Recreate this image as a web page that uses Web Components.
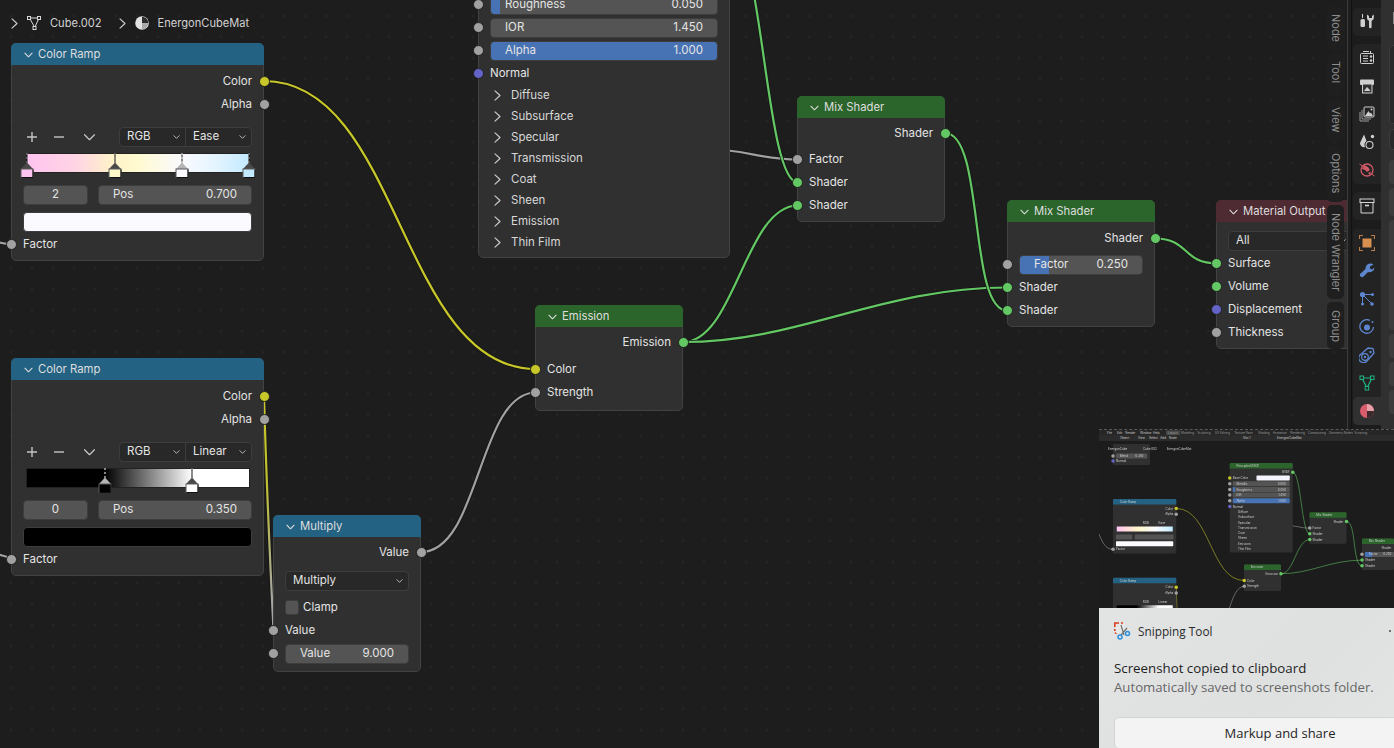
<!DOCTYPE html>
<html>
<head>
<meta charset="utf-8">
<title>Shader editor</title>
<style>
  html, body { margin: 0; height: 100%; background: #1d1d1d; overflow: hidden; }
</style>
</head>
<body>
<blender-app>
  <node-canvas slot="canvas">
    <node-wires></node-wires>

    <bl-node x="11" y="43" w="253" kind="blue" label="Color Ramp">
      <bl-row side="out" sock="yellow" label="Color" style="margin-top:1px"></bl-row>
      <bl-row side="out" sock="gray" label="Alpha"></bl-row>
      <color-ramp interp="Ease" index="2" pos="0.700" swatch="#fafaff" active="2"
        gradient="#ffc4f0 0%, #ffd4e4 22%, #fff3c8 39%, #fffad0 50%, #fafaff 70%, #e4f4ff 85%, #c2eaff 100%"
        stops="0:#ffc4f0,39.7:#fff8c9,70:#fafaff,100:#c2eaff"></color-ramp>
      <bl-row side="in" sock="gray" label="Factor"></bl-row>
    </bl-node>

    <bl-node x="11" y="358" w="253" kind="blue" label="Color Ramp">
      <bl-row side="out" sock="yellow" label="Color" style="margin-top:1px"></bl-row>
      <bl-row side="out" sock="gray" label="Alpha"></bl-row>
      <color-ramp interp="Linear" index="0" pos="0.350" swatch="#000000" active="0"
        gradient="#000 0%, #000 35%, #fff 74.5%, #fff 100%"
        stops="35:#000000,74.5:#ffffff"></color-ramp>
      <bl-row side="in" sock="gray" label="Factor"></bl-row>
    </bl-node>

    <bl-node x="273" y="515" w="148" kind="blue" label="Multiply">
      <bl-row side="out" sock="gray" label="Value"></bl-row>
      <bl-row style="margin-top:5px"><bl-select label="Multiply"></bl-select></bl-row>
      <bl-row style="margin-top:4px"><bl-check label="Clamp"></bl-check></bl-row>
      <bl-row side="in" sock="gray" label="Value"></bl-row>
      <bl-row side="in" sock="gray" style="margin-bottom:2px"><bl-field label="Value" value="9.000"></bl-field></bl-row>
    </bl-node>

    <bl-node x="478" y="-8" w="252">
      <bl-row side="in" sock="gray"><bl-field label="Roughness" value="0.050" fill="4"></bl-field></bl-row>
      <bl-row side="in" sock="gray"><bl-field label="IOR" value="1.450"></bl-field></bl-row>
      <bl-row side="in" sock="gray"><bl-field label="Alpha" value="1.000" fill="100"></bl-field></bl-row>
      <bl-row side="in" sock="purple" label="Normal"></bl-row>
      <bl-panel label="Diffuse"></bl-panel>
      <bl-panel label="Subsurface"></bl-panel>
      <bl-panel label="Specular"></bl-panel>
      <bl-panel label="Transmission"></bl-panel>
      <bl-panel label="Coat"></bl-panel>
      <bl-panel label="Sheen"></bl-panel>
      <bl-panel label="Emission"></bl-panel>
      <bl-panel label="Thin Film"></bl-panel>
    </bl-node>

    <bl-node x="535" y="305" w="148" kind="green" label="Emission">
      <bl-row side="out" sock="green" label="Emission"></bl-row>
      <bl-row side="in" sock="yellow" label="Color" style="margin-top:4px"></bl-row>
      <bl-row side="in" sock="gray" label="Strength" style="margin-bottom:2px"></bl-row>
    </bl-node>

    <bl-node x="797" y="96" w="148" kind="green" label="Mix Shader">
      <bl-row side="out" sock="green" label="Shader"></bl-row>
      <bl-row side="in" sock="gray" label="Factor" style="margin-top:3px"></bl-row>
      <bl-row side="in" sock="green" label="Shader"></bl-row>
      <bl-row side="in" sock="green" label="Shader"></bl-row>
    </bl-node>

    <bl-node x="1007" y="200" w="148" kind="green" label="Mix Shader">
      <bl-row side="out" sock="green" label="Shader" style="margin-top:1px"></bl-row>
      <bl-row side="in" sock="gray" style="margin-top:3px"><bl-field label="Factor" value="0.250" fill="23.5"></bl-field></bl-row>
      <bl-row side="in" sock="green" label="Shader"></bl-row>
      <bl-row side="in" sock="green" label="Shader"></bl-row>
    </bl-node>

    <bl-node x="1216" y="200" w="148" kind="red" label="Material Output">
      <bl-row style="margin-top:3px"><bl-select label="All"></bl-select></bl-row>
      <bl-row side="in" sock="green" label="Surface"></bl-row>
      <bl-row side="in" sock="green" label="Volume"></bl-row>
      <bl-row side="in" sock="purple" label="Displacement"></bl-row>
      <bl-row side="in" sock="gray" label="Thickness"></bl-row>
    </bl-node>

    <node-breadcrumb></node-breadcrumb>
    <side-tabs></side-tabs>
  </node-canvas>
  <prop-strip slot="strip"></prop-strip>
  <snip-toast slot="toast"></snip-toast>
</blender-app>

<script>
const FONT = 'Inter, "Liberation Sans", sans-serif';

const SOCKETS = { yellow: '#c7c729', gray: '#a1a1a1', green: '#63c763', purple: '#6363c7' };
const HEADERS = { blue: '#246283', green: '#2b652b', red: '#4e2a32' };

// shared between the real graph and the thumbnail in the toast
const WIRES = [
  ['M-60 150 C-30 220 -20 244 11 244', '#a1a1a1'],
  ['M-10 552 L11 558', '#a1a1a1'],
  ['M264 81 C400 81 400 369 536 369', '#c7c729'],
  ['M264 396 C266 470 270 560 273.5 630', 'url(#fade)'],
  ['M421 552 C480 552 478 392.5 536 392.5', '#a1a1a1'],
  ['M700 148 C750 150 760 159.5 798 159.5', '#a1a1a1'],
  ['M730 -64 C763 -64 765 182.5 798 182.5', '#63c763'],
  ['M683 342 C735 342 745 205.5 798 205.5', '#63c763'],
  ['M683 342 C800 342 880 287.5 1007 287.5', '#63c763'],
  ['M945 133 C985 133 968 310.5 1007 310.5', '#63c763'],
  ['M1155 238.5 C1190 238.5 1182 263.5 1217 263.5', '#63c763']
];
const WIRE_DEFS = `<defs><linearGradient id="fade" gradientUnits="userSpaceOnUse" x1="0" y1="396" x2="0" y2="630">
  <stop offset="0" stop-color="#c7c729"/><stop offset=".35" stop-color="#c0c030"/><stop offset=".85" stop-color="#a8a8a0"/><stop offset="1" stop-color="#a1a1a1"/>
</linearGradient></defs>`;

const CHEVRON_DOWN = (w, h, c = '#dcdcdc') => `<svg width="${w}" height="${h}" viewBox="0 0 10 6" fill="none" stroke="${c}" stroke-width="1.2" stroke-linecap="round" stroke-linejoin="round"><path d="M1 1 L5 5 L9 1"/></svg>`;
const CHEVRON_RIGHT = `<svg width="7" height="11" viewBox="0 0 7 11" fill="none" stroke="#cfcfcf" stroke-width="1.1" stroke-linecap="round" stroke-linejoin="round"><path d="M1 .8 L6 5.5 L1 10.2"/></svg>`;

class BlenderApp extends HTMLElement {
  constructor() {
    super();
    this.attachShadow({ mode: 'open' });
    this.shadowRoot.innerHTML = `
      <style>
        :host { display: flex; width: 1394px; height: 748px; position: relative; overflow: hidden; font-family: ${FONT}; }
        .toast { position: absolute; left: 1099px; top: 429px; right: 0; bottom: 0; }
      </style>
      <slot name="canvas"></slot>
      <slot name="strip"></slot>
      <div class="toast"><slot name="toast"></slot></div>`;
  }
}

class NodeCanvas extends HTMLElement {
  constructor() {
    super();
    this.attachShadow({ mode: 'open' });
    this.shadowRoot.innerHTML = `
      <style>
        :host {
          display: block; position: relative; flex: none; width: 1347px; height: 748px; overflow: hidden;
          background-color: #1d1d1d;
          background-image: radial-gradient(circle, #2c2c2c 0, #2c2c2c .8px, transparent 1.2px);
          background-size: 21px 21px;
          background-position: .5px 5.5px;
        }
      </style>
      <slot></slot>`;
  }
}

class NodeWires extends HTMLElement {
  constructor() {
    super();
    this.attachShadow({ mode: 'open' });
    const paths = WIRES.map(([d, c]) =>
      `<path d="${d}" stroke="#141414" stroke-width="3.6" fill="none"/><path d="${d}" stroke="${c}" stroke-width="2.2" fill="none"/>`).join('');
    this.shadowRoot.innerHTML = `
      <style>:host { position: absolute; left: 0; top: 0; } svg { display: block; overflow: visible; }</style>
      <svg width="1347" height="748">${WIRE_DEFS}${paths}</svg>`;
  }
}

class BlNode extends HTMLElement {
  connectedCallback() {
    if (this.shadowRoot) return;
    this.attachShadow({ mode: 'open' });
    const kind = this.getAttribute('kind');
    const label = this.getAttribute('label');
    this.style.left = this.getAttribute('x') + 'px';
    this.style.top = this.getAttribute('y') + 'px';
    this.style.width = this.getAttribute('w') + 'px';
    this.shadowRoot.innerHTML = `
      <style>
        :host {
          display: block; position: absolute; box-sizing: border-box;
          background: #303030; border: 1px solid #424242; border-radius: 5px;
          color: #e4e4e4; font-size: 11.5px; line-height: 1;
        }
        .head {
          display: flex; align-items: center; gap: 5px; height: 21px; padding-left: 12px; margin: -1px -1px 0;
          border: 1px solid transparent; border-bottom: 0; border-radius: 5px 5px 0 0;
          background: ${HEADERS[kind] || 'none'}; color: #dedede; font-size: 11.3px;
        }
        .body { padding: ${kind ? 4 : 0}px 0 4px; }
      </style>
      ${kind ? `<div class="head">${CHEVRON_DOWN(9, 6)}<span>${label}</span></div>` : ''}
      <div class="body"><slot></slot></div>`;
  }
}

class BlRow extends HTMLElement {
  connectedCallback() {
    if (this.shadowRoot) return;
    this.attachShadow({ mode: 'open' });
    const side = this.getAttribute('side');
    const sock = this.getAttribute('sock');
    const label = this.getAttribute('label');
    this.shadowRoot.innerHTML = `
      <style>
        :host {
          display: flex; align-items: center; position: relative; box-sizing: border-box; height: 23px; padding: 0 11px;
          justify-content: ${side === 'out' && label ? 'flex-end' : 'flex-start'};
        }
        .dot {
          position: absolute; top: 50%; width: 9px; height: 9px; margin-top: -5.5px; border-radius: 50%;
          border: 1px solid #202020; background: ${SOCKETS[sock] || 'none'};
          ${side === 'out' ? 'right: -6.5px;' : 'left: -6.5px;'}
        }
      </style>
      ${sock ? '<span class="dot"></span>' : ''}
      ${label ? `<span>${label}</span>` : '<slot></slot>'}`;
  }
}

class BlPanel extends HTMLElement {
  connectedCallback() {
    if (this.shadowRoot) return;
    this.attachShadow({ mode: 'open' });
    this.shadowRoot.innerHTML = `
      <style>
        :host { display: flex; align-items: center; gap: 10px; height: 21px; padding-left: 15px; color: #d8d8d8; }
        svg { display: block; }
      </style>
      ${CHEVRON_RIGHT}<span>${this.getAttribute('label')}</span>`;
  }
}

class BlField extends HTMLElement {
  connectedCallback() {
    if (this.shadowRoot) return;
    this.attachShadow({ mode: 'open' });
    const fill = this.getAttribute('fill');
    const label = this.getAttribute('label');
    const value = this.getAttribute('value');
    const bg = fill ? `linear-gradient(90deg, #4772b3 ${fill}%, #545454 ${fill}%)` : '#545454';
    this.shadowRoot.innerHTML = `
      <style>
        :host {
          display: flex; flex: 1; align-items: center; justify-content: ${label ? 'space-between' : 'center'};
          box-sizing: border-box; height: 20px; padding: 0 14px; border: 1px solid #3d3d3d; border-radius: 4px;
          background: ${bg}; color: #e4e4e4; font-size: 11.5px;
        }
      </style>
      ${label ? `<span>${label}</span>` : ''}<span>${value}</span>`;
  }
}

class BlSelect extends HTMLElement {
  connectedCallback() {
    if (this.shadowRoot) return;
    this.attachShadow({ mode: 'open' });
    const join = this.getAttribute('join');
    const radius = join === 'left' ? '4px 0 0 4px' : join === 'right' ? '0 4px 4px 0' : '4px';
    this.shadowRoot.innerHTML = `
      <style>
        :host {
          display: flex; flex: 1; align-items: center; justify-content: space-between; box-sizing: border-box;
          height: 20px; padding: 0 5px 0 7px; background: #282828; border: 1px solid #3d3d3d; border-radius: ${radius};
          ${join === 'right' ? 'margin-left: -1px;' : ''} color: #e4e4e4; font-size: 11.5px;
        }
        svg { display: block; }
      </style>
      <span>${this.getAttribute('label')}</span>${CHEVRON_DOWN(7, 4, '#d8d8d8')}`;
  }
}

class BlCheck extends HTMLElement {
  connectedCallback() {
    if (this.shadowRoot) return;
    this.attachShadow({ mode: 'open' });
    this.shadowRoot.innerHTML = `
      <style>
        :host { display: flex; align-items: center; gap: 4px; }
        i { display: block; box-sizing: border-box; width: 14px; height: 15px; background: #545454; border: 1px solid #3d3d3d; border-radius: 3px; }
      </style>
      <i></i><span>${this.getAttribute('label')}</span>`;
  }
}

class ColorRamp extends HTMLElement {
  connectedCallback() {
    if (this.shadowRoot) return;
    this.attachShadow({ mode: 'open' });
    const active = Number(this.getAttribute('active'));
    const markers = this.getAttribute('stops').split(',').map((s, i) => {
      const [p, c] = s.split(':');
      const on = i === active;
      const tri = on ? '#b4b4b4' : '#4a4a4a';
      const dash = on ? '#ffffff' : '#9a9a9a';
      return `<svg class="marker" style="left:calc(${p}% - 7px)" width="14" height="25" viewBox="0 0 14 25">
        <path d="M7 0 V10" stroke="#111" stroke-width="1"/>
        <path d="M7 0 V10" stroke="${dash}" stroke-width="1" stroke-dasharray="2 2"/>
        <path d="M7 9.5 L13 16 H1 Z" fill="${tri}"/>
        <rect x="1" y="16" width="12" height="8.5" fill="${c}" stroke="#5a5a5a"/>
        <path d="M13 16.5 V24.5 H1.500" fill="none" stroke="#111" stroke-width="1"/>
      </svg>`;
    }).join('');
    this.shadowRoot.innerHTML = `
      <style>
        :host { display: block; padding: 11px 11px 0; height: 117px; box-sizing: border-box; color: #e4e4e4; font-size: 11.5px; }
        .tools { display: flex; align-items: center; height: 20px; }
        .tools svg { display: block; flex: none; }
        .sel { display: flex; width: 133px; margin-left: auto; }
        .bar { position: relative; height: 20px; margin: 6px 2px 0 3px; box-sizing: border-box; border: 1px solid #222; background: linear-gradient(90deg, ${this.getAttribute('gradient')}); }
        .marker { position: absolute; top: -1px; display: block; }
        .nums { display: flex; gap: 10px; margin-top: 12px; }
        .nums .idx { flex: none; width: 65px; }
        .swatch { box-sizing: border-box; height: 20px; margin-top: 7px; border: 1px solid #3d3d3d; border-radius: 4px; background: ${this.getAttribute('swatch')}; }
      </style>
      <div class="tools">
        <svg width="18" height="12" viewBox="0 0 18 12" stroke="#c4c4c4" stroke-width="1.4"><path d="M4 6 H14 M9 1 V11"/></svg>
        <svg style="margin-left:9px" width="18" height="12" viewBox="0 0 18 12" stroke="#c4c4c4" stroke-width="1.4"><path d="M4 6 H14"/></svg>
        <svg style="margin-left:16px" width="11" height="7" viewBox="0 0 10 6" fill="none" stroke="#c8c8c8" stroke-width="1.100" stroke-linecap="round" stroke-linejoin="round"><path d="M.5 .5 L5 5 L9.500 .5"/></svg>
        <div class="sel"><bl-select join="left" label="RGB"></bl-select><bl-select join="right" label="${this.getAttribute('interp')}"></bl-select></div>
      </div>
      <div class="bar">${markers}</div>
      <div class="nums">
        <bl-field class="idx" value="${this.getAttribute('index')}"></bl-field>
        <bl-field label="Pos" value="${this.getAttribute('pos')}"></bl-field>
      </div>
      <div class="swatch"></div>`;
  }
}

class NodeBreadcrumb extends HTMLElement {
  constructor() {
    super();
    this.attachShadow({ mode: 'open' });
    this.shadowRoot.innerHTML = `
      <style>
        :host {
          display: flex; align-items: center; position: absolute; left: 11px; top: 14px; height: 18px;
          color: #d2d2d2; font-size: 11.1px;
        }
        svg { display: block; flex: none; }
      </style>
      ${CHEVRON_RIGHT}
      <svg style="margin-left:8px" width="16" height="16" viewBox="0 0 16 16" fill="none" stroke="#d8d8d8" stroke-width="1">
        <path d="M3.500 3 H13 L8.800 12.500 Z"/>
        <rect x="1.500" y="1.500" width="3" height="3" fill="#1d1d1d"/><rect x="11.500" y="1.500" width="3" height="3" fill="#1d1d1d"/><rect x="7" y="11.500" width="3" height="3" fill="#1d1d1d"/>
      </svg>
      <span style="margin-left:8px">Cube.002</span>
      <span style="margin-left:17px;display:block">${CHEVRON_RIGHT}</span>
      <svg style="margin-left:9px" width="14" height="14" viewBox="0 0 14 14">
        <circle cx="7" cy="7" r="6.800" fill="#e2e2e2"/>
        <path d="M7 7 V.800 A6.200 6.200 0 0 1 13.200 7 Z" fill="#2c2c2c"/>
        <path d="M7 7 H13.200 A6.200 6.200 0 0 1 7 13.200 Z" fill="#a8a8a8"/>
      </svg>
      <span style="margin-left:9px">EnergonCubeMat</span>`;
  }
}

class SideTabs extends HTMLElement {
  constructor() {
    super();
    this.attachShadow({ mode: 'open' });
    const tabs = [['Node', 44], ['Tool', 43], ['View', 43], ['Options', 57], ['Node Wrangler', 94], ['Group', 47]];
    this.shadowRoot.innerHTML = `
      <style>
        :host { display: flex; flex-direction: column; gap: 3px; position: absolute; left: 1327px; top: 6px; width: 17px; }
        div {
          box-sizing: border-box; writing-mode: vertical-rl; padding-top: 8px; text-align: left; line-height: 17px;
          background: #1f1f1f; border-radius: 5px; color: #8e8e8e; font-size: 11px;
        }
      </style>
      ${tabs.map(([t, h]) => `<div style="height:${h}px">${t}</div>`).join('')}`;
  }
}

const ICONS = {
  tool: `<path d="M3.500 0 V4" stroke="#cfcfcf"/><rect x="1.500" y="5" width="4.500" height="8" rx="1.500" fill="#cfcfcf"/><path fill="#cfcfcf" d="M8 0.500 V4 A3 3 0 0 0 10 6.800 V13 A1.300 1.300 0 0 0 12.600 13 V6.800 A3 3 0 0 0 14.800 4 V0.500 L13 2 V4 H10 V2 Z"/>`,
  render: `<rect x="1.500" y="3.500" width="13" height="10" rx="1" fill="none" stroke="#cfcfcf"/><path d="M4 6 H9 M4 8.500 H9 M4 11 H9" stroke="#cfcfcf"/><circle cx="12" cy="6.500" r="1.200" fill="#cfcfcf"/><circle cx="12" cy="10.500" r="1.200" fill="#cfcfcf"/><path d="M4 1.500 H10 M11.500 1 V3" stroke="#cfcfcf"/>`,
  output: `<rect x="1" y="1.500" width="14" height="5.500" rx="1" fill="#cfcfcf"/><rect x="3.500" y="6" width="9.500" height="9" fill="#333" stroke="#cfcfcf"/><path d="M5 13 L8 9 L10 11 L11.500 13 Z" fill="#cfcfcf"/>`,
  layers: `<rect x="5" y="1" width="10" height="10" rx="1" fill="none" stroke="#cfcfcf"/><path d="M6 10 L9.500 5 L11 7.500 L12 6.500 L14 10 Z" fill="#cfcfcf"/><circle cx="12.500" cy="3.500" r="1" fill="#cfcfcf"/><path d="M3 4 V13 H12 M1 6 V15 H10" fill="none" stroke="#9c9c9c"/>`,
  scene: `<path d="M5 .500 L1 9 A4 4 0 0 0 6 13 A5 5 0 0 1 7.500 7 Z" fill="#cfcfcf"/><circle cx="10.500" cy="11" r="3.500" fill="none" stroke="#cfcfcf" stroke-width="1.100"/><circle cx="13.500" cy="2.500" r="1.700" fill="#cfcfcf"/>`,
  world: `<circle cx="8" cy="8" r="6" fill="none" stroke="#d05a68" stroke-width="1.300"/><path d="M5 3 L9 5 L11 8 L8 10 L6 8 L3 7 Z M9 11 L12 9.500 L11 13 Z" fill="#d05a68"/><path d="M.500 2 L3.500 4 M15.500 14 L12.500 12" stroke="#d05a68"/>`,
  collection: `<rect x="1" y="1" width="14" height="3.500" fill="none" stroke="#d6d6d6"/><path d="M2 4.500 V15 H14 V4.500" fill="none" stroke="#d6d6d6"/><path d="M6 7.500 H10" stroke="#d6d6d6" stroke-width="1.600"/>`,
  object: `<path d="M.500 4 V.500 H4 M12 .500 H15.500 V4 M15.500 12 V15.500 H12 M4 15.500 H.500 V12" fill="none" stroke="#b67c4c" stroke-width="1.200"/><rect x="3.500" y="3.500" width="9" height="9" fill="#d89050"/>`,
  modifier: `<path fill="#5e86cf" d="M14.500 1.500 L11 3.500 V5.500 L13 6.500 L15.500 4.500 A5 5 0 0 1 9 9 L4 14 A2.300 2.300 0 0 1 1 11 L6.500 6 A5 5 0 0 1 11 .500 A4 4 0 0 1 14.500 1.500 Z"/>`,
  particles: `<circle cx="3.500" cy="3.500" r="2.600" fill="#5e86cf"/><circle cx="3.500" cy="13" r="1.500" fill="#5e86cf"/><circle cx="13.500" cy="3.500" r="1.500" fill="#5e86cf"/><circle cx="13" cy="13" r="1.800" fill="#5e86cf"/><path d="M3.500 5 V13 M5 3.500 H13 M5 5 L13 13" stroke="#5e86cf" stroke-width="1"/>`,
  physics: `<path d="M11 1.500 A6.800 6.800 0 1 0 14.500 8" fill="none" stroke="#5e86cf" stroke-width="1.300"/><circle cx="8" cy="8.500" r="3" fill="#5e86cf"/><circle cx="13.500" cy="3" r="1" fill="#5e86cf"/>`,
  constraints: `<path d="M9 1 L14 1.500 L15 6 L8 14 A4.500 4.500 0 0 1 1 8 Z" fill="none" stroke="#5e86cf" stroke-width="1.300"/><circle cx="6" cy="10" r="3.300" fill="none" stroke="#5e86cf" stroke-width="1.200"/><circle cx="6" cy="10" r="1.200" fill="#5e86cf"/><circle cx="11.500" cy="5" r="1.200" fill="#5e86cf"/>`,
  data: `<path d="M3 3 H13 L8 13 Z" fill="none" stroke="#1fb583" stroke-width="1.200"/><rect x="1" y="1" width="3.500" height="3.500" fill="#222" stroke="#1fb583"/><rect x="11.500" y="1" width="3.500" height="3.500" fill="#222" stroke="#1fb583"/><rect x="6.200" y="11.500" width="3.500" height="3.500" fill="#222" stroke="#1fb583"/>`,
  material: `<circle cx="8" cy="8" r="7" fill="#d85d6c"/><path d="M8 8 V1 A7 7 0 0 1 15 8 Z" fill="#e9a0a8"/><path d="M8 8 H15 A7 7 0 0 1 8 15 Z" fill="#3a2a2c"/>`
};

class PropStrip extends HTMLElement {
  constructor() {
    super();
    this.attachShadow({ mode: 'open' });
    const item = (name, on) => `<div class="item${on ? ' on' : ''}"><svg width="16" height="16" viewBox="0 0 16 16">${ICONS[name]}</svg></div>`;
    const group = (names, top) => `<div class="group" style="margin-top:${top}px">${names.map(n => item(n, n === 'material')).join('')}</div>`;
    const boxes = [[79, 'd', 21], [21, 'd', 5], [24, 'l', 10], [28, 'l', 4], [110, 'l', 4], [24, 'l', 4], [24, 'l', 4], [24, 'l', 4]];
    this.shadowRoot.innerHTML = `
      <style>
        :host { display: flex; flex: none; width: 47px; height: 748px; background: #1d1d1d; box-sizing: border-box; border-left: 1px solid #3c3c3c; }
        .tabs { flex: none; width: 28px; margin-left: 3px; padding-left: 1px; border-left: 1px solid #111; background: #1c1c1c; }
        .group { background: #232323; border-radius: 5px 0 0 5px; }
        .item { display: flex; align-items: center; justify-content: center; height: 28px; }
        .item.on { background: #303030; border-radius: 5px 0 0 5px; }
        svg { display: block; }
        .panel { flex: 1; background: #303030; padding-left: 8px; }
        .corner { width: 8px; height: 12px; margin: 12px 0 0 4px; box-sizing: border-box; border: 1px solid #8a8a8a; border-right: 0; }
        .box { border-radius: 4px 0 0 4px; box-sizing: border-box; }
        .box.d { background: #292929; border: 1px solid #3d3d3d; }
        .box.l { background: #3c3c3c; }
      </style>
      <div class="tabs">
        ${group(['tool'], 8)}
        ${group(['render', 'output', 'layers', 'scene', 'world'], 8)}
        ${group(['collection'], 8)}
        ${group(['object', 'modifier', 'particles', 'physics', 'constraints', 'data', 'material'], 9)}
      </div>
      <div class="panel">
        <div class="corner"></div>
        ${boxes.map(([h, k, t]) => `<div class="box ${k}" style="height:${h}px;margin-top:${t}px"></div>`).join('')}
      </div>`;
  }
}

class MiniShot extends HTMLElement {
  constructor() {
    super();
    this.attachShadow({ mode: 'open' });
    const txt = (x, y, s, c = '#cfcfcf', anchor = 'start') => `<text x="${x}" y="${y}" fill="${c}" text-anchor="${anchor}" font-size="12">${s}</text>`;
    const node = (x, y, w, h, head, title) => `
      <rect x="${x}" y="${y}" width="${w}" height="${h}" rx="5" fill="#303030"/>
      ${head ? `<path d="M${x} ${y + 22} V${y + 5} Q${x} ${y} ${x + 5} ${y} H${x + w - 5} Q${x + w} ${y} ${x + w} ${y + 5} V${y + 22} Z" fill="${head}"/>${txt(x + 27, y + 15, title)}` : ''}`;
    const field = (x, y, w, label, value, fill) => `
      <rect x="${x}" y="${y - 10}" width="${w}" height="20" rx="3" fill="${fill || '#545454'}"/>
      ${txt(x + 15, y + 4, label)}${txt(x + w - 15, y + 4, value, '#cfcfcf', 'end')}`;
    const dot = (x, y, c) => `<circle cx="${x}" cy="${y}" r="7" fill="${SOCKETS[c]}"/>`;
    const ramp = (y, grad, swatch, a) => `
      ${node(11, y, 253, 218, HEADERS.blue, 'Color Ramp')}
      ${txt(252, y + 42, 'Color', '#cfcfcf', 'end')}${txt(252, y + 65, 'Alpha', '#cfcfcf', 'end')}
      ${dot(264, y + 38, 'yellow')}${dot(264, y + 61, 'gray')}${dot(11, y + 201, 'gray')}
      ${txt(130, y + 99, 'RGB')}${txt(193, y + 99, a)}
      <rect x="26" y="${y + 110}" width="224" height="20" fill="url(#${grad})"/>
      <rect x="23" y="${y + 142}" width="65" height="20" rx="3" fill="#545454"/><rect x="98" y="${y + 142}" width="155" height="20" rx="3" fill="#545454"/>
      <rect x="23" y="${y + 169}" width="229" height="20" rx="3" fill="${swatch}"/>
      ${txt(23, y + 205, 'Factor')}`;
    const rowsLeft = [['Diffuse', 95], ['Subsurface', 116], ['Specular', 137], ['Transmission', 158], ['Coat', 179], ['Sheen', 200], ['Emission', 221], ['Thin Film', 242]];
    const tabs = ['Layout', 'Modeling', 'Sculpting', 'UV Editing', 'Texture Paint', 'Shading', 'Animation', 'Rendering', 'Compositing', 'Geometry Nodes', 'Scripting'];
    let tabX = 231;
    const wires = WIRES.map(([d, c]) => `<path d="${d}" stroke="${c}" stroke-width="2.800" fill="none" opacity=".8"/>`).join('');
    this.shadowRoot.innerHTML = `
      <style>
        :host { display: block; flex: none; height: 179px; background: #1c1c1c; overflow: hidden; border-top: 1px dashed #5a5a5a; box-sizing: border-box; }
        svg { display: block; filter: blur(.7px); font-family: ${FONT}; }
      </style>
      <svg width="295" height="178" viewBox="-45 -233 1180 712">
        ${WIRE_DEFS}
        <linearGradient id="g1"><stop offset="0" stop-color="#ffc4f0"/><stop offset=".39" stop-color="#fff8c9"/><stop offset=".7" stop-color="#fafaff"/><stop offset="1" stop-color="#c2eaff"/></linearGradient>
        <linearGradient id="g2"><stop offset=".35" stop-color="#000"/><stop offset=".75" stop-color="#fff"/></linearGradient>
        <rect x="-45" y="-233" width="1180" height="20" fill="#262626"/>
        ${txt(-13, -217, 'File')}${txt(27, -217, 'Edit')}${txt(60, -217, 'Render')}${txt(119, -217, 'Window')}${txt(171, -217, 'Help')}
        ${tabs.map((t, i) => {
          const x = tabX; tabX += t.length * 6.2 + 15;
          return (i === 0 ? `<rect x="${x - 8}" y="-231" width="56" height="18" rx="3" fill="#4a4a4a"/>` : '') + txt(x, -217, t, '#9a9a9a');
        }).join('')}
        <rect x="-45" y="-213" width="1180" height="24" fill="#2b2b2b"/>
        ${txt(39, -196, 'Object')}${txt(111, -196, 'View')}${txt(155, -196, 'Select')}${txt(200, -196, 'Add')}${txt(235, -196, 'Node')}
        ${txt(531, -196, 'Slot 1')}${txt(667, -196, 'EnergonCubeMat')}
        ${wires}
        ${node(11, -177, 148, 84)}
        ${field(23, -129, 125, 'Blend', '0.350')}${txt(23, -105, 'Normal')}${dot(11, -109, 'purple')}${dot(11, -129, 'gray')}
        ${txt(-9, -153, 'EnergonCube')}${txt(131, -153, 'Cube.002')}${txt(226, -153, 'EnergonCubeMat')}
        ${node(478, -101, 252, 358, '#2b652b', 'Principled BSDF')}
        ${txt(718, -60, 'BSDF', '#cfcfcf', 'end')}${dot(730, -64, 'green')}
        ${txt(490, -37, 'Base Color')}<rect x="585" y="-51" width="133" height="20" rx="3" fill="#f4f4ff"/>${dot(478, -41, 'yellow')}
        ${field(490, -18, 228, 'Metallic', '0.000')}${field(490, 5, 228, 'Roughness', '0.050')}
        <rect x="490" y="-5" width="9" height="20" fill="#4772b3"/>
        ${field(490, 27, 228, 'IOR', '1.450')}${field(490, 50, 228, 'Alpha', '1.000', '#4772b3')}
        ${[-18, 5, 27, 50].map(y => dot(478, y, 'gray')).join('')}
        ${txt(490, 77, 'Normal')}${dot(478, 73, 'purple')}
        ${rowsLeft.map(([t, y]) => txt(511, y + 4, t)).join('')}
        ${ramp(43, 'g1', '#fafaff', 'Ease')}
        ${ramp(358, 'g2', '#000', 'Linear')}
        ${node(535, 305, 148, 106, '#2b652b', 'Emission')}
        ${txt(671, 346, 'Emission', '#cfcfcf', 'end')}${txt(547, 373, 'Color')}${txt(547, 396, 'Strength')}
        ${dot(683, 342, 'green')}${dot(536, 369, 'yellow')}${dot(536, 392, 'gray')}
        ${node(797, 96, 148, 126, '#2b652b', 'Mix Shader')}
        ${txt(933, 137, 'Shader', '#cfcfcf', 'end')}${txt(809, 163, 'Factor')}${txt(809, 186, 'Shader')}${txt(809, 209, 'Shader')}
        ${dot(945, 133, 'green')}${dot(798, 159, 'gray')}${dot(798, 182, 'green')}${dot(798, 205, 'green')}
        ${node(1007, 201, 128, 126, '#2b652b', 'Mix Shader')}
        ${txt(1125, 242, 'Shader', '#cfcfcf', 'end')}
        <rect x="1019" y="255" width="116" height="20" fill="#545454"/><rect x="1019" y="255" width="29" height="20" rx="3" fill="#4772b3"/>
        ${txt(1034, 268, 'Factor')}${txt(1125, 268, '0.250', '#cfcfcf', 'end')}${txt(1019, 291, 'Shader')}${txt(1019, 314, 'Shader')}
        ${dot(1007, 264, 'gray')}${dot(1007, 287, 'green')}${dot(1007, 310, 'green')}
      </svg>`;
  }
}

class SnipToast extends HTMLElement {
  constructor() {
    super();
    this.attachShadow({ mode: 'open' });
    this.shadowRoot.innerHTML = `
      <style>
        :host {
          display: flex; flex-direction: column; height: 100%; overflow: hidden;
          font-family: "Open Sans", "Noto Sans", sans-serif;
        }
        .card { flex: 1; position: relative; background: linear-gradient(135deg, #e2e4e4, #dfe1e1 60%, #e3e4e4); padding: 14px 15px 0; color: #1f1f1f; }
        .app { display: flex; align-items: center; gap: 7px; height: 18px; font-size: 11.8px; color: #2a2a2a; }
        .app svg { display: block; }
        .more { position: absolute; right: 3px; top: 22px; width: 2px; height: 2px; background: #444; border-radius: 50%; }
        .title { margin-top: 19px; font-size: 13.3px; line-height: 19px; }
        .sub { font-size: 13.2px; line-height: 19px; color: #666; white-space: nowrap; }
        .btn {
          display: flex; align-items: center; justify-content: center; box-sizing: border-box;
          width: 332px; height: 32px; margin-top: 20px; background: #f3f3f3; border: 1px solid #d3d5d5; border-radius: 5px;
          font-size: 13px;
        }
      </style>
      <mini-shot></mini-shot>
      <div class="card">
        <div class="app">
          <svg width="17" height="18" viewBox="0 0 17 18" fill="none">
            <path d="M.800 5 V1 H5 M7 1 H9 M.800 7 V9 M.800 11 H3" stroke="#d8401f" stroke-width="1.600"/>
            <rect x="2" y="2" width="9" height="9" fill="#e8e8e8"/>
            <path d="M7 3 L10 13 M13 6 L7 13" stroke="#707070" stroke-width="1.200"/>
            <circle cx="6" cy="15" r="2" stroke="#2a8fdc" stroke-width="1.500"/>
            <circle cx="13.500" cy="11.500" r="2" stroke="#2a8fdc" stroke-width="1.500"/>
          </svg>
          <span>Snipping Tool</span>
        </div>
        <span class="more"></span>
        <div class="title">Screenshot copied to clipboard</div>
        <div class="sub">Automatically saved to screenshots folder.</div>
        <div class="btn">Markup and share</div>
      </div>`;
  }
}

customElements.define('blender-app', BlenderApp);
customElements.define('node-canvas', NodeCanvas);
customElements.define('node-wires', NodeWires);
customElements.define('bl-node', BlNode);
customElements.define('bl-row', BlRow);
customElements.define('bl-panel', BlPanel);
customElements.define('bl-field', BlField);
customElements.define('bl-select', BlSelect);
customElements.define('bl-check', BlCheck);
customElements.define('color-ramp', ColorRamp);
customElements.define('node-breadcrumb', NodeBreadcrumb);
customElements.define('side-tabs', SideTabs);
customElements.define('prop-strip', PropStrip);
customElements.define('mini-shot', MiniShot);
customElements.define('snip-toast', SnipToast);
</script>
</body>
</html>
